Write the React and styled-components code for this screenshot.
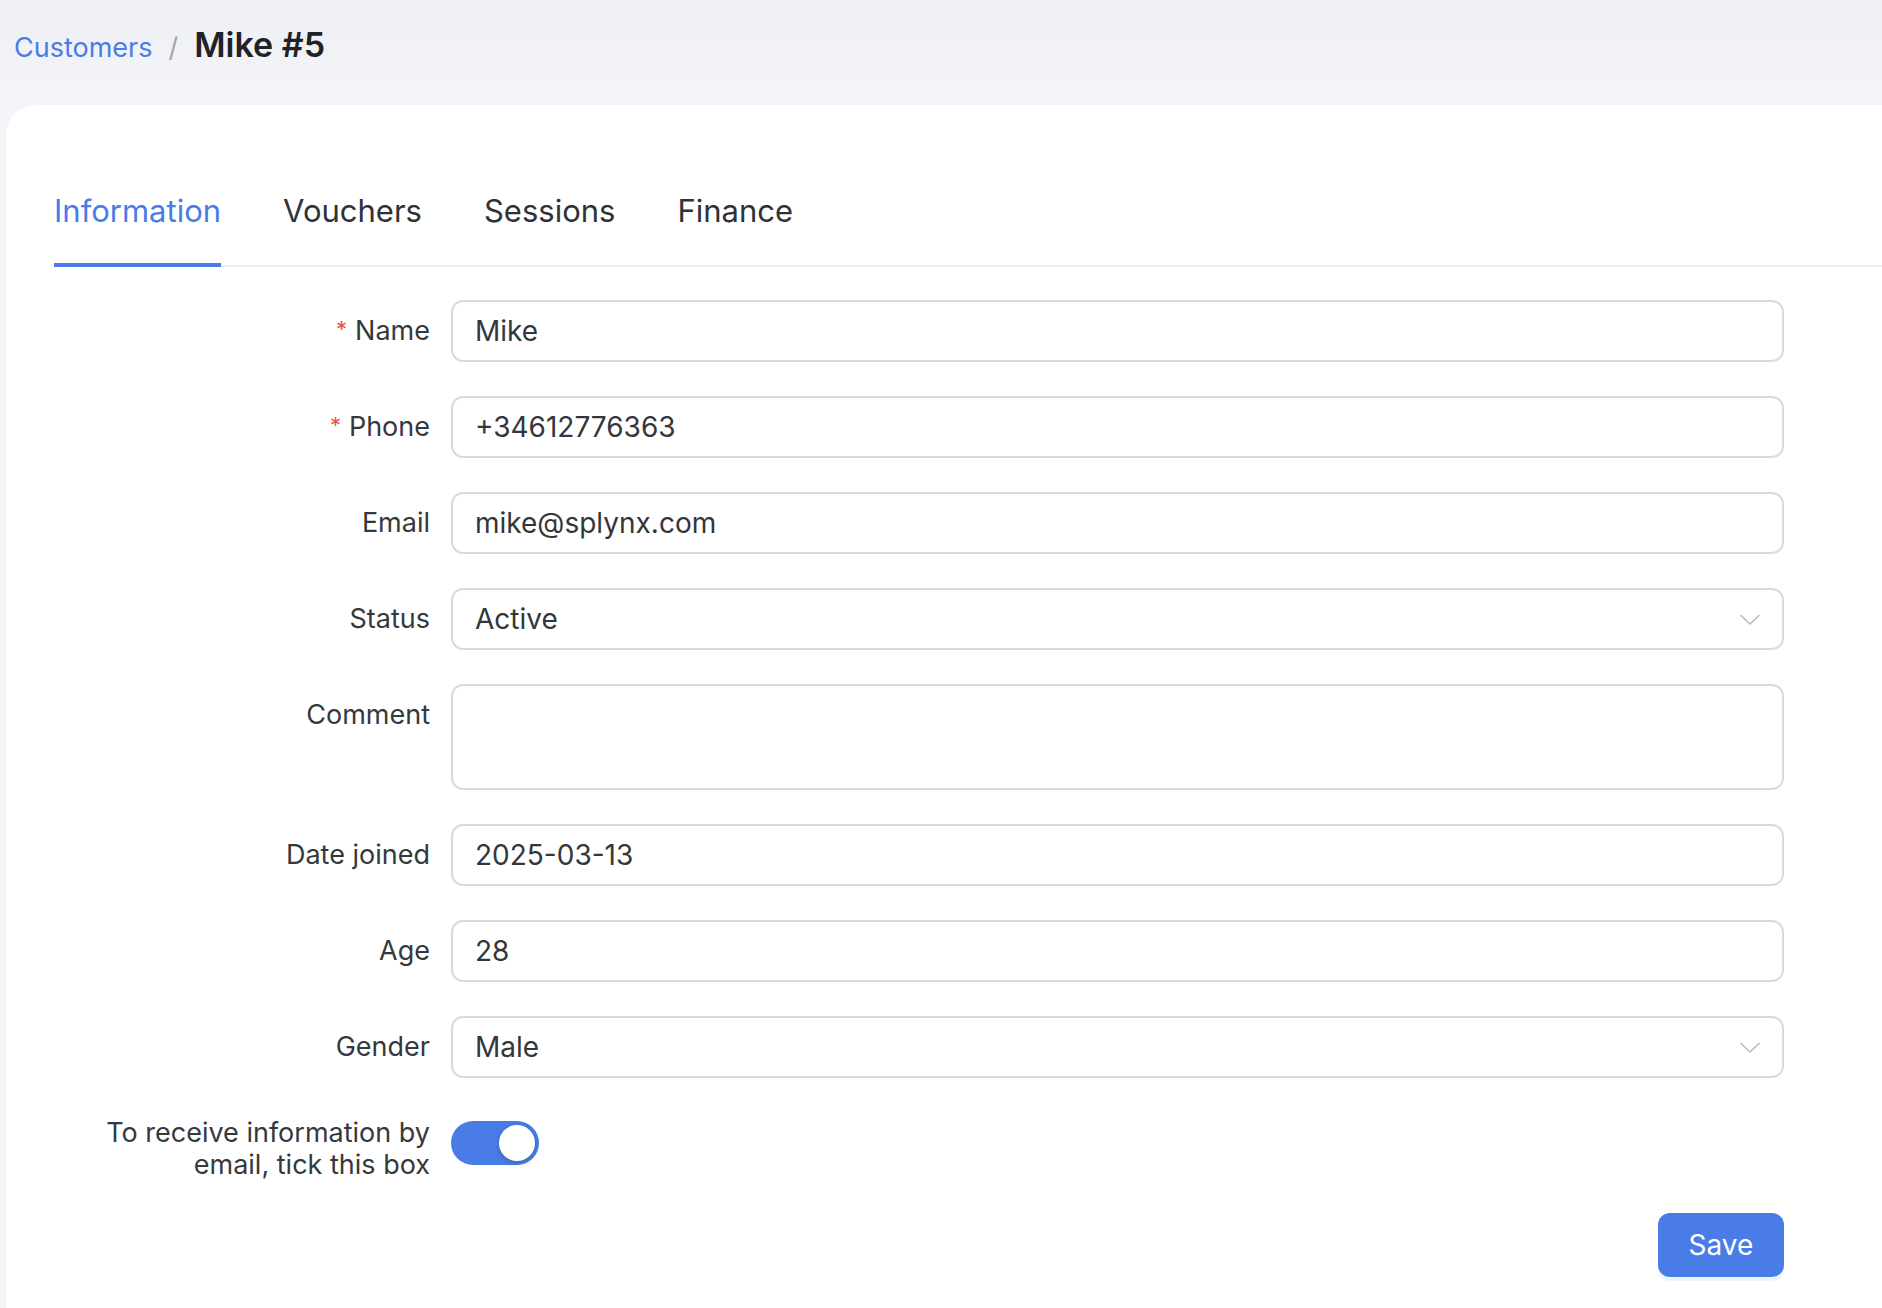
import React, { useState } from "react";
import styled, { createGlobalStyle } from "styled-components";

const Global = createGlobalStyle`
  html, body { margin: 0; padding: 0; }
  body {
    font-family: Inter, "Noto Sans", "Liberation Sans", sans-serif;
    background: linear-gradient(180deg, #edeff4 0px, #f4f5f9 105px, #f4f5f9 100%);
    min-height: 100vh;
    overflow: hidden;
    -webkit-font-smoothing: antialiased;
  }
  * { box-sizing: border-box; }
`;

const Page = styled.div`
  display: flex;
  flex-direction: column;
  min-height: 100vh;
`;

const Header = styled.header`
  height: 105px;
  padding: 24px 14px 0;
  display: flex;
  align-items: baseline;
  gap: 16px;
`;

const Crumb = styled.a`
  font-size: 27px;
  color: #4a7ce8;
  text-decoration: none;
`;

const Sep = styled.span`
  font-size: 27px;
  color: #a6a6a6;
`;

const Title = styled.h1`
  margin: 0;
  font-size: 34px;
  font-weight: 600;
  color: #1f2226;
`;

const Card = styled.main`
  flex: 1;
  margin-left: 6px;
  background: #fff;
  border-top-left-radius: 30px;
  padding: 82px 0 0 48px;
`;

const TabBar = styled.nav`
  display: flex;
  gap: 62px;
  box-shadow: inset 0 -2px 0 #efefef;
`;

const Tab = styled.button`
  border: 0;
  background: none;
  padding: 0 0 28px;
  margin: 0;
  font-family: inherit;
  font-size: 31px;
  line-height: 48px;
  color: ${(p) => (p.$active ? "#4a7ce8" : "#2f3236")};
  border-bottom: 4px solid ${(p) => (p.$active ? "#4a7ce8" : "transparent")};
  cursor: pointer;
`;

const Form = styled.form`
  display: grid;
  grid-template-columns: 376px 1333px;
  column-gap: 21px;
  row-gap: 34px;
  margin-top: 33px;
  align-items: start;
`;

const Label = styled.label`
  min-height: 62px;
  display: flex;
  align-items: center;
  justify-content: flex-end;
  text-align: right;
  font-size: 27px;
  line-height: 32px;
  color: #35393e;
  padding-top: ${(p) => (p.$multi ? "5px" : "0")};
`;

const Req = styled.span`
  color: #e5534b;
  font-size: 22px;
  margin-right: 8px;
  position: relative;
  top: -2px;
`;

const Field = styled.div`
  position: relative;
  height: ${(p) => p.$h || 62}px;
  border: 2px solid #dadada;
  border-radius: 12px;
  background: #fff;
  display: flex;
  align-items: center;
  padding: 0 22px 0 22px;
`;

const Input = styled.input`
  border: 0;
  outline: none;
  width: 100%;
  font-family: inherit;
  font-size: 28px;
  color: #33373b;
  background: transparent;
  padding: 0;
`;

const TextArea = styled.textarea`
  border: 0;
  outline: none;
  resize: none;
  width: 100%;
  height: 100%;
  font-family: inherit;
  font-size: 28px;
  color: #33373b;
  padding: 13px 0 0;
  background: transparent;
`;

const SelectValue = styled.span`
  flex: 1;
  font-size: 28px;
  color: #33373b;
`;

const Chevron = () => (
  <svg width="20" height="11" viewBox="0 0 20 11" fill="none">
    <path d="M1 1.5l9 8.5 9-8.5" stroke="#bdbdbd" strokeWidth="1.7" strokeLinecap="round" strokeLinejoin="round" />
  </svg>
);

const SwitchCell = styled.div`
  height: 62px;
  display: flex;
  align-items: center;
`;

const Switch = styled.button`
  width: 88px;
  height: 44px;
  border: 0;
  border-radius: 22px;
  padding: 0;
  background: ${(p) => (p.$on ? "#4a7ce8" : "#bfbfbf")};
  position: relative;
  cursor: pointer;
`;

const Knob = styled.span`
  position: absolute;
  top: 4px;
  left: ${(p) => (p.$on ? "48px" : "4px")};
  width: 36px;
  height: 36px;
  border-radius: 50%;
  background: #fff;
  box-shadow: 0 2px 6px rgba(0, 35, 11, 0.22);
`;

const Actions = styled.div`
  grid-column: 2;
  display: flex;
  justify-content: flex-end;
  margin-top: -2px;
`;

const SaveButton = styled.button`
  width: 126px;
  height: 64px;
  border: 0;
  border-radius: 12px;
  background: #4a7ce8;
  color: #fff;
  font-family: inherit;
  font-size: 28px;
  box-shadow: 0 4px 0 rgba(5, 145, 255, 0.08);
  cursor: pointer;
`;

const tabs = ["Information", "Vouchers", "Sessions", "Finance"];

export default function App() {
  const [on, setOn] = useState(true);
  return (
    <Page>
      <Global />
      <Header>
        <Crumb href="#">Customers</Crumb>
        <Sep>/</Sep>
        <Title>Mike #5</Title>
      </Header>
      <Card>
        <TabBar>
          {tabs.map((t, i) => (
            <Tab key={t} $active={i === 0} type="button">
              {t}
            </Tab>
          ))}
        </TabBar>
        <Form onSubmit={(e) => e.preventDefault()}>
          <Label><Req>*</Req>Name</Label>
          <Field><Input defaultValue="Mike" /></Field>

          <Label><Req>*</Req>Phone</Label>
          <Field><Input defaultValue="+34612776363" /></Field>

          <Label>Email</Label>
          <Field><Input defaultValue="mike@splynx.com" /></Field>

          <Label>Status</Label>
          <Field><SelectValue>Active</SelectValue><Chevron /></Field>

          <Label>Comment</Label>
          <Field $h={106}><TextArea /></Field>

          <Label>Date joined</Label>
          <Field><Input defaultValue="2025-03-13" /></Field>

          <Label>Age</Label>
          <Field><Input defaultValue="28" /></Field>

          <Label>Gender</Label>
          <Field><SelectValue>Male</SelectValue><Chevron /></Field>

          <Label $multi>To receive information by<br />email, tick this box</Label>
          <SwitchCell>
            <Switch type="button" $on={on} onClick={() => setOn(!on)}>
              <Knob $on={on} />
            </Switch>
          </SwitchCell>

          <Actions>
            <SaveButton type="submit">Save</SaveButton>
          </Actions>
        </Form>
      </Card>
    </Page>
  );
}
